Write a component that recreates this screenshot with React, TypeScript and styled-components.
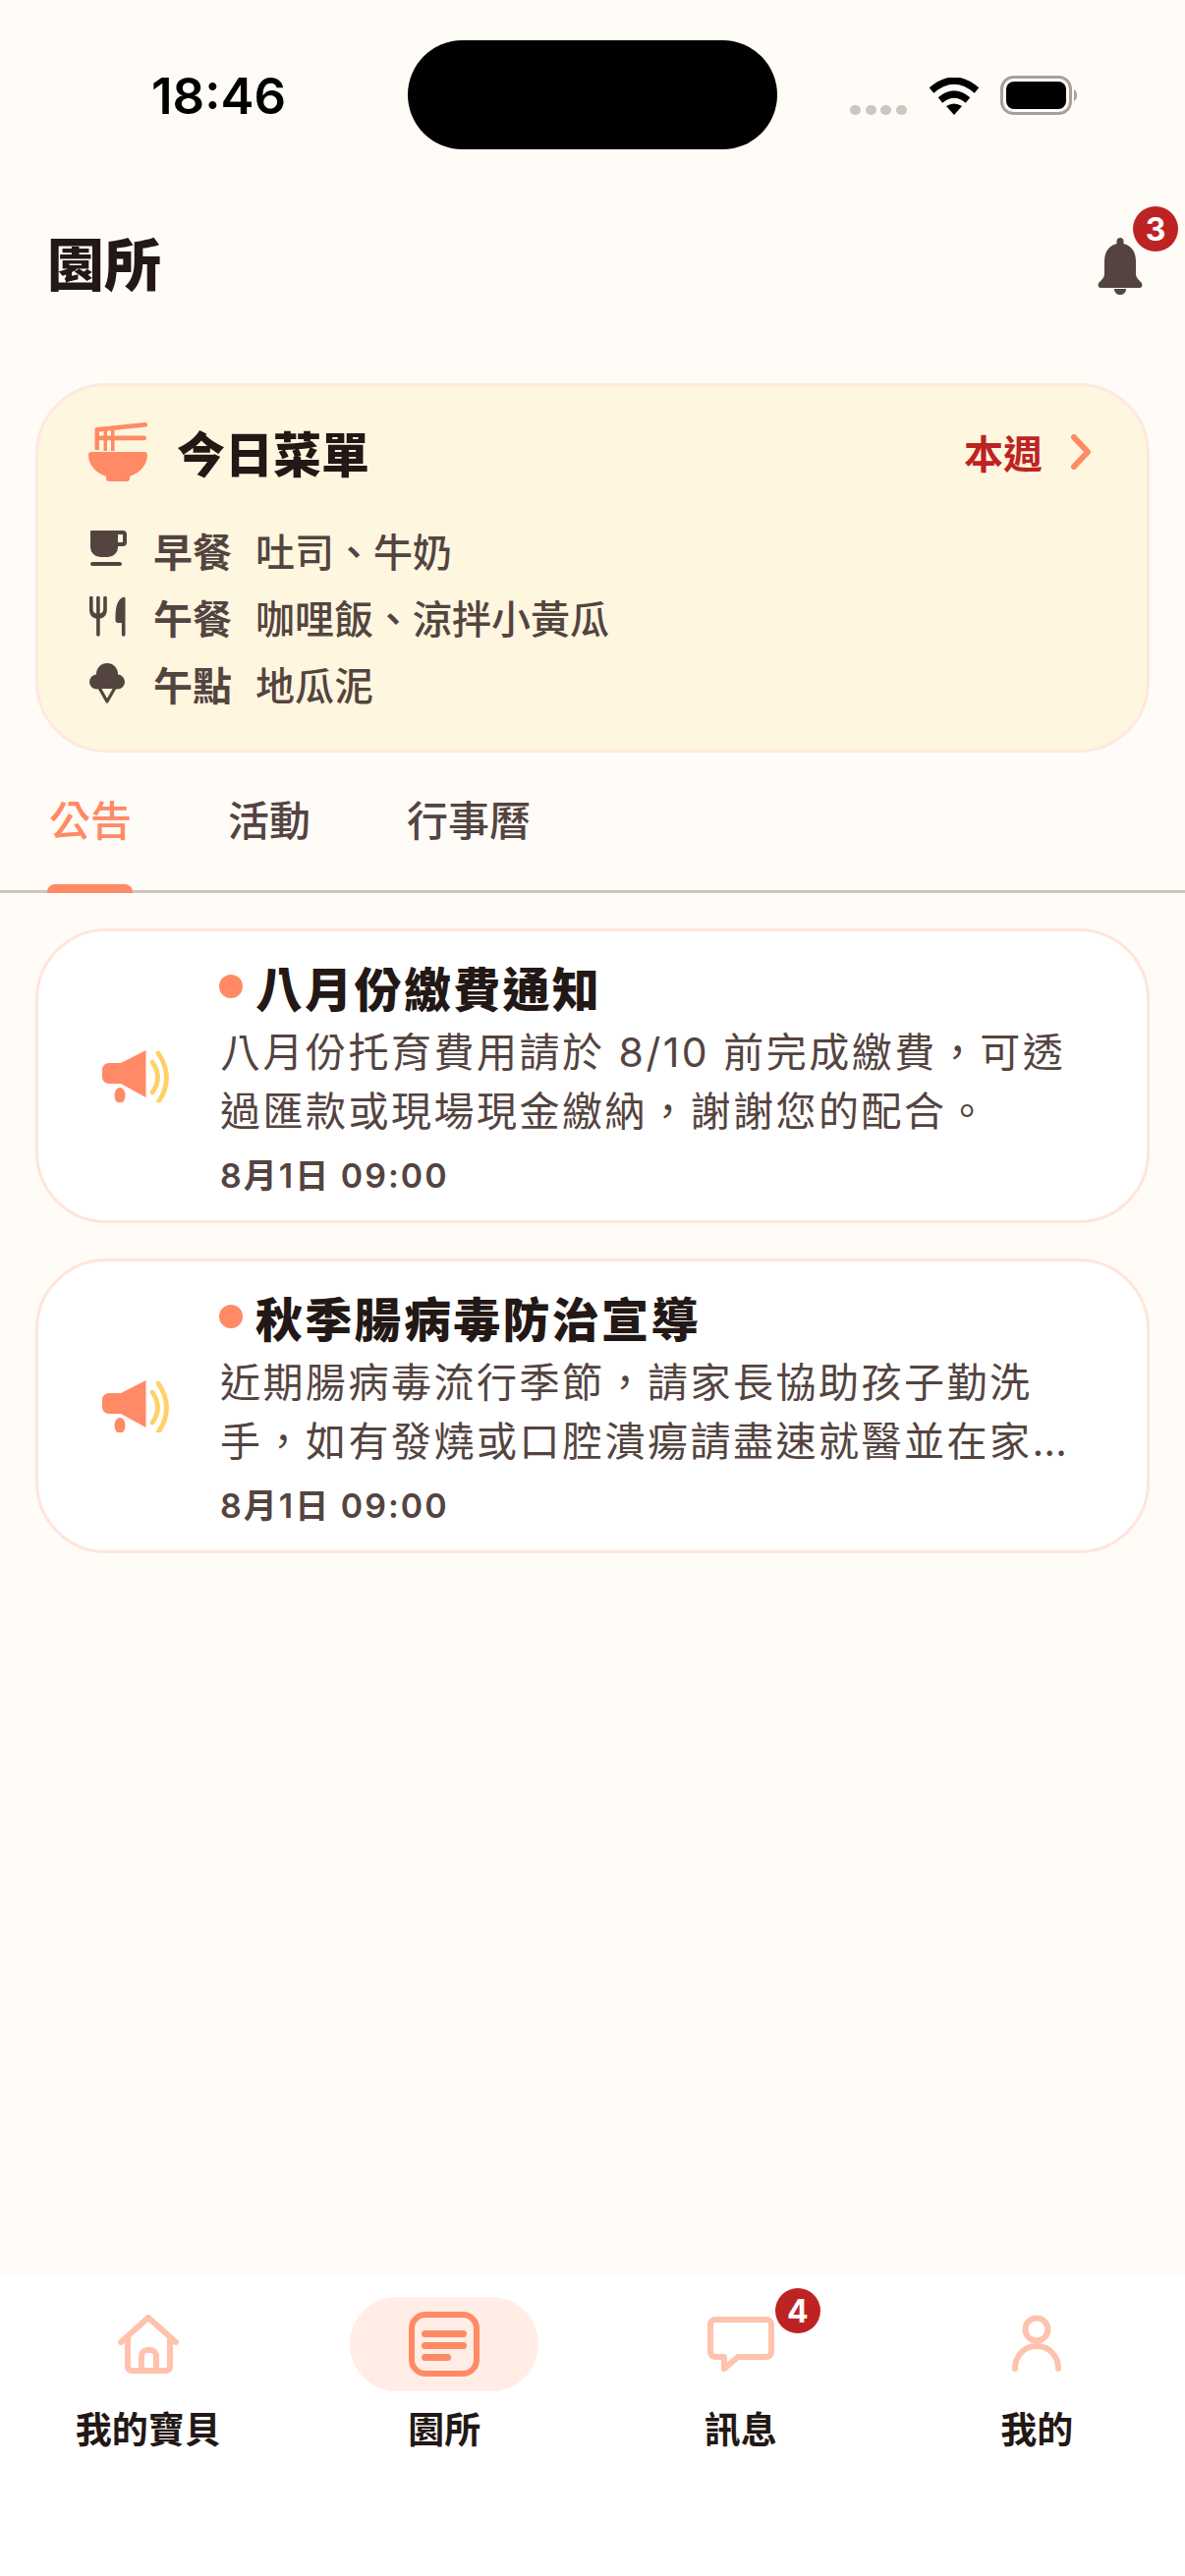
import React from "react";
import styled, { createGlobalStyle } from "styled-components";

const coral = "#FF8A65";
const softCoral = "#FFC2AD";
const ink = "#231815";
const brown = "#54443F";
const red = "#BE2323";
const cjk = `"Noto Sans CJK TC", "Noto Sans", sans-serif`;
const latinFirst = `Inter, "Noto Sans CJK TC", sans-serif`;

const GlobalStyle = createGlobalStyle`
  html, body {
    margin: 0;
    padding: 0;
    background: #fffcf8;
  }
  * {
    box-sizing: border-box;
  }
`;

const Screen = styled.div`
  width: 1206px;
  height: 2622px;
  display: flex;
  flex-direction: column;
  font-family: ${cjk};
  color: ${ink};
  background: #fffcf8;
  overflow: hidden;
`;

/* status bar */
const StatusBar = styled.div`
  height: 190px;
  padding-top: 41px;
  display: grid;
  grid-template-columns: 415px 376px 1fr;
  align-items: start;
`;
const Clock = styled.div`
  padding: 25px 0 0 154px;
  font-family: Inter, "Liberation Sans", sans-serif;
  font-size: 51px;
  line-height: 63px;
  font-weight: 600;
  color: #000;
`;
const Island = styled.div`
  height: 111px;
  border-radius: 56px;
  background: #000;
`;
const StatusIcons = styled.div`
  padding: 37px 0 0 74px;
  height: 76px;
  display: flex;
  align-items: flex-end;
`;
const SignalDots = styled.div`
  display: flex;
  gap: 4.5px;
  margin-right: 22px;
`;
const SignalDot = styled.span`
  width: 11px;
  height: 10px;
  border-radius: 5px;
  background: #cfc6c1;
`;
const Wifi = styled.svg`
  width: 52px;
  height: 38px;
  margin-right: 21px;
`;
const Battery = styled.svg`
  width: 79px;
  height: 40px;
`;

/* header */
const Header = styled.header`
  height: 160px;
  padding: 0 43px 0 48px;
  display: flex;
  align-items: center;
  justify-content: space-between;
`;
const PageTitle = styled.h1`
  margin: -9px 0 0;
  font-size: 58px;
  line-height: 80px;
  font-weight: 900;
  color: ${ink};
`;
const BellWrap = styled.div`
  position: relative;
  width: 46px;
  height: 58px;
  margin-top: 2px;
`;
const Badge = styled.span`
  position: absolute;
  width: 46px;
  height: 46px;
  border-radius: 50%;
  background: ${red};
  color: #fff;
  font-family: Inter, "Liberation Sans", sans-serif;
  font-size: 32px;
  font-weight: 700;
  display: flex;
  align-items: center;
  justify-content: center;
`;
const BellBadge = styled(Badge)`
  top: -32px;
  right: -36px;
`;

/* today's menu */
const MenuCard = styled.section`
  height: 376px;
  margin: 40px 36px 0;
  padding: 34px 56px 0 51px;
  border: 3px solid #ffe8df;
  border-radius: 72px;
  background: #fff6e0;
`;
const MenuHead = styled.div`
  height: 66px;
  display: flex;
  align-items: center;
`;
const BowlIcon = styled.svg`
  width: 60px;
  height: 60px;
  margin-right: 30px;
`;
const MenuTitle = styled.h2`
  margin: 0;
  flex: 1;
  font-size: 49px;
  line-height: 66px;
  font-weight: 900;
  color: ${ink};
`;
const WeekLink = styled.a`
  display: flex;
  align-items: center;
  gap: 28px;
  font-size: 40px;
  font-weight: 700;
  color: ${red};
`;
const Chevron = styled.svg`
  width: 22px;
  height: 36px;
`;
const MenuRows = styled.div`
  margin-top: 38px;
  display: flex;
  flex-direction: column;
  gap: 10px;
`;
const MenuRow = styled.div`
  height: 58px;
  display: flex;
  align-items: center;
  font-size: 40px;
  color: ${brown};
`;
const MealIcon = styled.svg`
  width: 40px;
  height: 42px;
  margin-right: 26px;
  flex: none;
`;
const MealName = styled.span`
  width: 104px;
  font-weight: 700;
`;
const MealFood = styled.span`
  font-weight: 500;
`;

/* tabs */
const Tabs = styled.nav`
  height: 143px;
  padding: 0 0 0 50px;
  display: flex;
  gap: 98px;
  border-bottom: 3px solid #cfc4be;
`;
const Tab = styled.a<{ $active?: boolean }>`
  position: relative;
  height: 140px;
  padding-top: 38px;
  font-size: 42px;
  line-height: 58px;
  font-weight: 500;
  color: ${(p) => (p.$active ? coral : brown)};
  &::after {
    content: "";
    display: ${(p) => (p.$active ? "block" : "none")};
    position: absolute;
    left: -2px;
    right: -1px;
    bottom: -3px;
    height: 9px;
    border-radius: 8px 8px 0 0;
    background: ${coral};
  }
`;

/* announcements */
const NoticeList = styled.div`
  padding: 36px 36px 0;
  display: flex;
  flex-direction: column;
  gap: 36px;
`;
const NoticeCard = styled.article`
  height: 300px;
  padding: 26px 74px 0 62px;
  display: flex;
  border: 3px solid #ffe5db;
  border-radius: 72px;
  background: #fff;
`;
const NoticeIcon = styled.svg`
  width: 80px;
  height: 60px;
  margin: 88px 43px 0 0;
  flex: none;
`;
const NoticeBody = styled.div`
  flex: 1;
  min-width: 0;
`;
const NoticeTitle = styled.h3`
  margin: 0 0 0 -1px;
  height: 60px;
  display: flex;
  align-items: center;
  font-size: 48px;
  line-height: 60px;
  font-weight: 900;
  letter-spacing: 2.3px;
  color: ${ink};
`;
const UnreadDot = styled.span`
  width: 24px;
  height: 24px;
  margin-right: 13px;
  border-radius: 50%;
  background: ${coral};
  flex: none;
`;
const NoticeText = styled.p`
  margin: 7px 0 0;
  font-family: ${latinFirst};
  font-size: 41px;
  line-height: 60px;
  letter-spacing: 2.5px;
  color: ${brown};
  display: -webkit-box;
  -webkit-box-orient: vertical;
  -webkit-line-clamp: 2;
  overflow: hidden;
`;
const NoticeDate = styled.div`
  margin-top: 14px;
  font-family: ${latinFirst};
  font-size: 34px;
  line-height: 44px;
  font-weight: 600;
  letter-spacing: 2px;
  color: ${brown};
`;

/* bottom navigation */
const Spacer = styled.div`
  flex: 1;
`;
const BottomNav = styled.nav`
  height: 306px;
  padding-top: 22px;
  display: grid;
  grid-template-columns: repeat(4, 1fr);
  background: #fff;
`;
const NavItem = styled.a`
  display: flex;
  flex-direction: column;
  align-items: center;
`;
const NavIconSlot = styled.div<{ $active?: boolean }>`
  position: relative;
  width: 192px;
  height: 96px;
  border-radius: 48px;
  display: flex;
  align-items: center;
  justify-content: center;
  background: ${(p) => (p.$active ? "#ffede6" : "transparent")};
`;
const NavBadge = styled(Badge)`
  top: -9px;
  right: 15px;
`;
const NavLabel = styled.span`
  margin-top: 12px;
  font-size: 37px;
  line-height: 50px;
  font-weight: 700;
  color: ${ink};
`;

const BowlSvg = () => (
  <BowlIcon viewBox="0 0 60 60">
    <g fill={coral}>
      <path d="M3 30h54a3 3 0 0 1 3 3c0 10-7 18-18 22v2a3 3 0 0 1-3 3H21a3 3 0 0 1-3-3v-2C7 51 0 43 0 33a3 3 0 0 1 3-3Z" />
      <path d="M8 5 57.500 0a2.300 2.300 0 0 1 .5 4.600L11 9.500V28H6.500V6.500A1.500 1.500 0 0 1 8 5Z" />
      <rect x="10" y="13.500" width="49" height="4.800" rx="2.400" />
      <rect x="15.500" y="8" width="3.500" height="21" />
      <rect x="23" y="8" width="3.500" height="21" />
    </g>
  </BowlIcon>
);

const CupSvg = () => (
  <MealIcon viewBox="0 0 40 42">
    <path
      fill={brown}
      fillRule="evenodd"
      d="M3 1a1 1 0 0 0-1 1v16a10 10 0 0 0 10 10h8a10 10 0 0 0 10-10v-1h5a4 4 0 0 0 4-4V5a4 4 0 0 0-4-4ZM30 5h5v8h-5Z"
    />
    <rect x="2" y="33" width="32" height="4" rx="2" fill={brown} />
  </MealIcon>
);

const CutlerySvg = () => (
  <MealIcon viewBox="0 0 40 42">
    <path
      fill={brown}
      d="M1 1.500a1.800 1.800 0 0 1 3.600 0V13c0 2.500 1.300 4 3.500 4.600V1.500a1.800 1.800 0 0 1 3.600 0v16.100c2.200-.6 3.500-2.100 3.500-4.600V1.500a1.800 1.800 0 0 1 3.600 0V14c0 5-3 8-7.100 8.700V39a1.800 1.800 0 0 1-3.600 0V22.700C4 22 1 19 1 14Z"
    />
    <path fill={brown} d="M37.500 2v37a1.800 1.800 0 0 1-3.600 0V27H30c-1.500 0-2.500-1-2.500-2.500C27.500 14 28 4 35 1c1.200-.5 2.500 0 2.500 1Z" />
  </MealIcon>
);

const IceCreamSvg = () => (
  <MealIcon viewBox="0 0 40 42">
    <g fill={brown}>
      <circle cx="19" cy="11" r="11" />
      <circle cx="8.500" cy="19" r="7.500" />
      <circle cx="29.500" cy="19" r="7.500" />
      <rect x="10" y="12" width="18" height="14" />
    </g>
    <path d="M11 25 19 39 27 25" fill="none" stroke={brown} strokeWidth="3.200" strokeLinejoin="round" />
  </MealIcon>
);

const MegaphoneSvg = () => (
  <NoticeIcon viewBox="0 0 80 60">
    <path fill={coral} d="M10 20h12L47.500 7v48L22 41H10c-4 0-7-3-7-7v-7c0-4 3-7 7-7Z" />
    <ellipse cx="21" cy="53" rx="5.500" ry="8" fill={coral} />
    <g fill="none" stroke="#FFD166" strokeWidth="4.800" strokeLinecap="round">
      <path d="M54 19Q65 35 54 50" />
      <path d="M60 10Q77 35 60 60" />
    </g>
  </NoticeIcon>
);

const HomeSvg = () => (
  <svg width="62" height="60" viewBox="0 0 62 60" fill="none" stroke={softCoral} strokeWidth="6" strokeLinecap="round" strokeLinejoin="round">
    <path d="M3 28 31 3l28 25" />
    <path d="M10 24v29a4 4 0 0 0 4 4h35a4 4 0 0 0 4-4V24" />
    <path d="M24 57V42a6 6 0 0 1 6-6h3a6 6 0 0 1 6 6v15" />
  </svg>
);

const BoardSvg = () => (
  <svg width="72" height="66" viewBox="0 0 72 66" fill="none">
    <rect x="3" y="3" width="66" height="60" rx="14" stroke={coral} strokeWidth="6" />
    <g fill={coral}>
      <rect x="13" y="19" width="46" height="7" rx="3.500" />
      <rect x="13" y="31" width="46" height="7" rx="3.500" />
      <rect x="13" y="43" width="30" height="7" rx="3.500" />
    </g>
  </svg>
);

const ChatSvg = () => (
  <svg width="68" height="56" viewBox="0 0 68 56" fill="none" stroke={softCoral} strokeWidth="6" strokeLinejoin="round">
    <path d="M8 3h52a5 5 0 0 1 5 5v28a5 5 0 0 1-5 5H31L17 53V41H8a5 5 0 0 1-5-5V8a5 5 0 0 1 5-5Z" />
  </svg>
);

const PersonSvg = () => (
  <svg width="56" height="60" viewBox="0 0 56 60" fill="none" stroke={softCoral} strokeWidth="6" strokeLinecap="round">
    <circle cx="28" cy="15" r="11.500" />
    <path d="M6 55c0-14 10-23 22-23s22 9 22 23" />
  </svg>
);

const meals = [
  { name: "早餐", food: "吐司、牛奶", icon: <CupSvg /> },
  { name: "午餐", food: "咖哩飯、涼拌小黃瓜", icon: <CutlerySvg /> },
  { name: "午點", food: "地瓜泥", icon: <IceCreamSvg /> },
];

const notices = [
  {
    title: "八月份繳費通知",
    text: "八月份托育費用請於 8/10 前完成繳費，可透過匯款或現場現金繳納，謝謝您的配合。",
    date: "8月1日 09:00",
  },
  {
    title: "秋季腸病毒防治宣導",
    text: "近期腸病毒流行季節，請家長協助孩子勤洗手，如有發燒或口腔潰瘍請盡速就醫並在家休息。",
    date: "8月1日 09:00",
  },
];

const navItems = [
  { label: "我的寶貝", icon: <HomeSvg /> },
  { label: "園所", icon: <BoardSvg />, active: true },
  { label: "訊息", icon: <ChatSvg />, badge: 4 },
  { label: "我的", icon: <PersonSvg /> },
];

const App = () => {
  return (
    <Screen>
      <GlobalStyle />
      <StatusBar>
        <Clock>18:46</Clock>
        <Island />
        <StatusIcons>
          <SignalDots>
            {[0, 1, 2, 3].map((i) => (
              <SignalDot key={i} />
            ))}
          </SignalDots>
          <Wifi viewBox="0 0 52 38">
            <g fill="none" stroke="#000" strokeWidth="7">
              <path d="M3 13Q26-7 49 13" />
              <path d="M12 23Q26 11 40 23" />
            </g>
            <path d="M26 38 18 29Q26 24 34 29Z" fill="#000" />
          </Wifi>
          <Battery viewBox="0 0 79 40">
            <rect x="1.500" y="1.500" width="70" height="37" rx="12" fill="none" stroke="#a9a09b" strokeWidth="3" />
            <rect x="6" y="6" width="61" height="28" rx="8" fill="#000" />
            <path d="M75 14c2 1 3 3 3 6s-1 5-3 6Z" fill="#a9a09b" />
          </Battery>
        </StatusIcons>
      </StatusBar>

      <Header>
        <PageTitle>園所</PageTitle>
        <BellWrap>
          <svg width="46" height="58" viewBox="0 0 46 58" fill={brown}>
            <path d="M23 0a3.500 3.500 0 0 1 3.500 3.500V6C35 8 39 15 39 24v13c0 3 2 5 5 8 2 2 2 6-1 6H3c-3 0-3-4-1-6 3-3 5-5 5-8V24C7 15 11 8 19.500 6V3.500A3.500 3.500 0 0 1 23 0Z" />
            <path d="M17 52h12c0 4-3 6-6 6s-6-2-6-6Z" />
          </svg>
          <BellBadge>3</BellBadge>
        </BellWrap>
      </Header>

      <MenuCard>
        <MenuHead>
          <BowlSvg />
          <MenuTitle>今日菜單</MenuTitle>
          <WeekLink>
            本週
            <Chevron viewBox="0 0 22 36" fill="none" stroke={coral} strokeWidth="6" strokeLinecap="round" strokeLinejoin="round">
              <path d="M4 3 18 18 4 33" />
            </Chevron>
          </WeekLink>
        </MenuHead>
        <MenuRows>
          {meals.map((meal) => (
            <MenuRow key={meal.name}>
              {meal.icon}
              <MealName>{meal.name}</MealName>
              <MealFood>{meal.food}</MealFood>
            </MenuRow>
          ))}
        </MenuRows>
      </MenuCard>

      <Tabs>
        <Tab $active>公告</Tab>
        <Tab>活動</Tab>
        <Tab>行事曆</Tab>
      </Tabs>

      <NoticeList>
        {notices.map((notice) => (
          <NoticeCard key={notice.title}>
            <MegaphoneSvg />
            <NoticeBody>
              <NoticeTitle>
                <UnreadDot />
                {notice.title}
              </NoticeTitle>
              <NoticeText>{notice.text}</NoticeText>
              <NoticeDate>{notice.date}</NoticeDate>
            </NoticeBody>
          </NoticeCard>
        ))}
      </NoticeList>

      <Spacer />

      <BottomNav>
        {navItems.map((item) => (
          <NavItem key={item.label}>
            <NavIconSlot $active={item.active}>
              {item.icon}
              {item.badge ? <NavBadge>{item.badge}</NavBadge> : null}
            </NavIconSlot>
            <NavLabel>{item.label}</NavLabel>
          </NavItem>
        ))}
      </BottomNav>
    </Screen>
  );
};

export default App;
